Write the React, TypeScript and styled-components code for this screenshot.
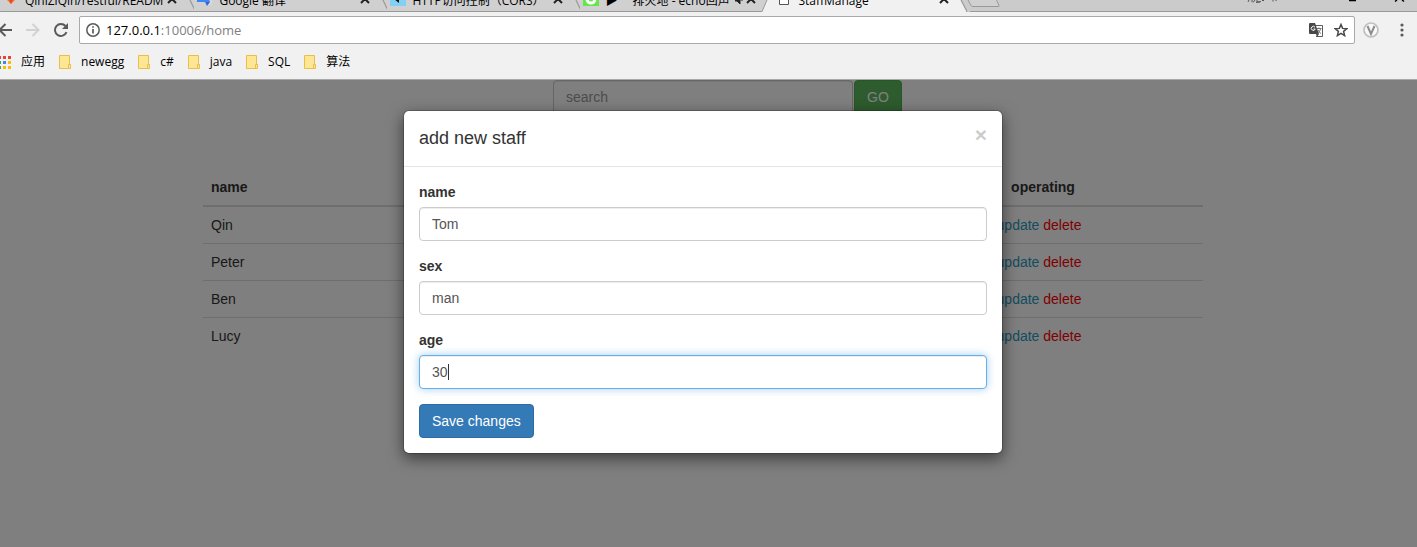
import React from "react";
import styled, { createGlobalStyle } from "styled-components";

const GlobalStyle = createGlobalStyle`
  * { box-sizing: border-box; }
  body {
    margin: 0;
    background: #fff;
    color: #333;
    font: 14px/20px "Liberation Sans", Arial, sans-serif;
  }
  button, input { font: inherit; }
`;

const chromeFont = `"Open Sans", "Noto Sans CJK SC", sans-serif`;

const Window = styled.div`
  display: flex;
  flex-direction: column;
  min-height: 100vh;
  overflow: hidden;
`;

/* ---------- browser chrome ---------- */

const Chrome = styled.header`
  font: 12px/16px ${chromeFont};
  color: #000;
  background: #f1f1f1;
  border-bottom: 1px solid #a9a9a9;
`;

const TabStrip = styled.div`
  display: flex;
  align-items: flex-end;
  height: 12px;
  overflow: hidden;
  background: #cbcbcb;
  box-shadow: inset 0 -1px #999;
`;

const Tab = styled.div<{ $active?: boolean }>`
  display: flex;
  flex: 0 0 193px;
  align-items: flex-end;
  height: 28px;
  padding-left: 3px;
  background: ${(p) => (p.$active ? "#f1f1f1" : "#d0d0d0")};
  box-shadow: ${(p) => (p.$active ? "none" : "inset 0 -1px #999")};
`;

const TabIcon = styled.svg`
  flex: none;
  width: 16px;
  height: 16px;
  margin-bottom: 6px;
`;

const TabTitle = styled.span`
  flex: 1;
  min-width: 0;
  margin: 0 4px 3px 6px;
  overflow: hidden;
  white-space: nowrap;
`;

const TabButton = styled.button`
  display: flex;
  flex: none;
  margin: 0 0 8px;
  padding: 0;
  border: 0;
  background: none;
`;

const TabEdge = styled.svg`
  flex: none;
  margin-left: 4px;
  width: 13px;
  height: 12px;
  overflow: visible;
`;

const StripEnd = styled.div`
  display: flex;
  flex: 1;
  justify-content: space-between;
`;

const Toolbar = styled.div`
  display: flex;
  align-items: center;
  height: 36px;
`;

const IconButton = styled.button<{ $width: number }>`
  display: flex;
  flex: none;
  justify-content: center;
  width: ${(p) => p.$width}px;
  padding: 0;
  border: 0;
  background: none;
`;

const NavButtons = styled.div`
  display: flex;
  flex: none;
  align-items: center;
  gap: 12px;
  width: 79px;
`;

const AddressBar = styled.div`
  display: flex;
  flex: 1;
  align-items: center;
  height: 28px;
  padding: 0 0 0 6px;
  background: #fff;
  border: 1px solid #a9a9a9;
  border-radius: 2px;
`;

const Address = styled.div`
  flex: 1;
  margin-left: 6px;
  color: #808080;
  font-size: 13px;
  line-height: 20px;
`;

const Host = styled.span`
  color: #000;
`;

const Bookmarks = styled.nav`
  display: flex;
  align-items: center;
  gap: 14px;
  height: 31px;
  padding-bottom: 3px;
`;

const Bookmark = styled.a`
  display: flex;
  align-items: center;
  gap: 10px;
  color: #000;
  text-decoration: none;
`;

/* ---------- page ---------- */

const Viewport = styled.div`
  position: relative;
  flex: 1;
  padding-right: 11px;
`;

const Content = styled.main`
  max-width: 1000px;
  margin: 0 auto;
`;

const SearchRow = styled.form`
  display: flex;
  gap: 1px;
  margin: 0 0 55px 35%;
`;

const TextInput = styled.input<{ $width: string; $focused?: boolean }>`
  width: ${(p) => p.$width};
  height: 34px;
  padding: 6px 12px;
  color: #555;
  background: #fff;
  border: 1px solid ${(p) => (p.$focused ? "#66afe9" : "#ccc")};
  border-radius: 4px;
  outline: 0;
  box-shadow: inset 0 1px 1px rgba(0, 0, 0, 0.075)
    ${(p) => (p.$focused ? ", 0 0 8px rgba(102, 175, 233, 0.6)" : "")};
  &::placeholder { color: #999; opacity: 1; }
`;

const Button = styled.button<{ $tone: "success" | "primary" }>`
  height: 34px;
  padding: 6px 12px;
  color: #fff;
  background: ${(p) => (p.$tone === "success" ? "#5cb85c" : "#337ab7")};
  border: 1px solid ${(p) => (p.$tone === "success" ? "#4cae4c" : "#2e6da4")};
  border-radius: 4px;
`;

const Table = styled.table`
  width: 100%;
  border-spacing: 0;
  th, td { padding: 8px; text-align: left; }
  th { border-bottom: 2px solid #ddd; }
  tr + tr td { border-top: 1px solid #ddd; }
  th:last-child, td:last-child { width: 32%; text-align: center; }
  td:last-child { padding-right: 16px; }
`;

const Action = styled.a<{ $color: string }>`
  color: ${(p) => p.$color};
  text-decoration: none;
`;

const Backdrop = styled.div`
  position: absolute;
  inset: 0;
  padding: 30px 11px 30px 0;
  background: rgba(0, 0, 0, 0.5);
`;

const Dialog = styled.section`
  max-width: 600px;
  margin: 0 auto;
  background: #fff;
  background-clip: padding-box;
  border: 1px solid rgba(0, 0, 0, 0.2);
  border-radius: 6px;
  box-shadow: 0 5px 15px rgba(0, 0, 0, 0.5);
`;

const DialogHeader = styled.header`
  display: flex;
  justify-content: space-between;
  align-items: flex-start;
  padding: 15px;
  border-bottom: 1px solid #e5e5e5;
`;

const DialogTitle = styled.h4`
  margin: 0;
  font-size: 18px;
  font-weight: 500;
  line-height: 25px;
`;

const CloseButton = styled.button`
  padding: 0;
  border: 0;
  background: none;
  color: #000;
  opacity: 0.2;
  font-size: 21px;
  font-weight: 700;
  line-height: 17px;
`;

const DialogBody = styled.form`
  padding: 15px;
`;

const Field = styled.div`
  position: relative;
  margin-bottom: 15px;
`;

const Label = styled.label`
  display: block;
  margin-bottom: 5px;
  font-weight: 700;
`;

const Caret = styled.span`
  position: absolute;
  bottom: 9px;
  left: 29px;
  width: 1px;
  height: 16px;
  background: #333;
`;

const CloseMark = () => (
  <svg width="10" height="10" viewBox="0 0 10 10" stroke="#222" strokeWidth="2">
    <path d="M1 1l8 8M9 1l-8 8" />
  </svg>
);

const Folder = () => (
  <svg width="12" height="14" viewBox="0 0 12 14">
    <path d="M.5.5h10v9h1v4H.5z" fill="#ffe694" stroke="#e6c14a" />
    <path d="M9.500 13V9.500h2" fill="none" stroke="#e6c14a" />
  </svg>
);

const appColors = ["#ea4335", "#ea4335", "#ea4335", "#34a853", "#4285f4", "#fbbc05", "#34a853", "#fbbc05", "#fbbc05"];

const AppsGrid = () => (
  <svg width="11" height="13" viewBox="2 0 11 13">
    {appColors.map((c, i) => (
      <rect key={i} x={(i % 3) * 5} y={Math.floor(i / 3) * 5} width="3" height="3" fill={c} />
    ))}
  </svg>
);

const tabs = [
  {
    title: "QinlZiQin/restful/READM",
    icon: <><path d="M1 7l7 7 7-7-3-7-2 6H6L4 0z" fill="#fc6d26" /><path d="M5 6l3 8 3-8z" fill="#e24329" /></>,
  },
  {
    title: "Google 翻译",
    icon: <><path d="M6 3h9v12H9z" fill="#d8d8d8" /><path d="M0 0h9l4 12H0z" fill="#4285f4" /><path d="M8 12h5l-3 4z" fill="#3367d6" /></>,
  },
  {
    title: "HTTP访问控制（CORS）",
    icon: <><path d="M0 0h16v16H0z" fill="#83d0f2" /><path d="M4 9l5-6v10z" fill="#111" /></>,
  },
  {
    title: "▶ 一排火地 - echo回声",
    icon: <><path d="M0 0h16v16H0z" fill="#66e64b" /><circle cx="8" cy="9" r="4" fill="none" stroke="#fff" strokeWidth="3" /></>,
    sound: true,
  },
  {
    title: "StaffManage",
    icon: <path d="M3.500 1.500h9v13h-9z" fill="#fff" stroke="#555" />,
    active: true,
  },
];

const bookmarks = ["newegg", "c#", "java", "SQL", "算法"];
const staff = ["Qin", "Peter", "Ben", "Lucy"];
const fields = [
  { id: "name", value: "Tom" },
  { id: "sex", value: "man" },
  { id: "age", value: "30", focused: true },
];

function BrowserChrome() {
  return (
    <Chrome>
      <TabStrip>
        {tabs.map((tab, i) => (
          <Tab key={tab.title} $active={tab.active}>
            <TabIcon viewBox="0 0 16 16">{tab.icon}</TabIcon>
            <TabTitle>{tab.title}</TabTitle>
            {tab.sound && (
              <TabButton aria-label="Mute tab">
                <svg width="11" height="10" viewBox="0 0 11 10">
                  <path d="M0 3h2l3-3v10L2 7H0zM7 3v4" fill="#222" stroke="#222" />
                </svg>
              </TabButton>
            )}
            <TabButton aria-label="Close tab"><CloseMark /></TabButton>
            <TabEdge viewBox="0 0 13 12">
              {tab.active && (
                <path d="M8 0l6 12h3V0z" fill="#cbcbcb" />
              )}
              {tabs[i + 1]?.active ? (
                <>
                  <path d="M7 0L2 12h12V0z" fill="#f1f1f1" />
                  <path d="M7 0L2 11.500" stroke="#999" />
                </>
              ) : (
                <path d={tab.active ? "M8 0l6 11.500" : "M9 0l5.500 11.500"} stroke="#999" strokeWidth="1.200" />
              )}
            </TabEdge>
          </Tab>
        ))}
        <StripEnd>
          <svg width="36" height="12" viewBox="0 0 36 12">
            <path d="M2 0l3 5.500q.5 1 2 1h25q1.500 0 1-1L30.500 0" fill="#d0d0d0" stroke="#999" />
          </svg>
          <svg width="172" height="12" viewBox="0 0 172 12" fill="none" stroke="#555">
            <path d="M4 0l-1 2M7 0v2M10 0l-2 2.500M12 0v2h3M11 2.500l5-1M17 .5h2M28 0v1.500M31 0v1" />
            <path d="M104 .5h7M150 1.500l2-1.500M159 1.500L157 0" stroke="#000" strokeWidth="1.500" />
          </svg>
        </StripEnd>
      </TabStrip>
      <Toolbar>
        <NavButtons>
          <IconButton $width={14} aria-label="Back">
            <svg width="14" height="14" viewBox="0 0 14 14" fill="none" stroke="#5a5a5a" strokeWidth="2">
              <path d="M12 7H0M5.500 1l-6 6 6 6" />
            </svg>
          </IconButton>
          <IconButton $width={14} aria-label="Forward">
            <svg width="14" height="14" viewBox="0 0 14 14" fill="none" stroke="#d2d2d2" strokeWidth="2">
              <path d="M0 7h12M6.500 1l6 6-6 6" />
            </svg>
          </IconButton>
          <IconButton $width={18} aria-label="Reload">
            <svg width="16" height="16" viewBox="0 0 16 16" fill="none" stroke="#5a5a5a" strokeWidth="2">
              <path d="M13.500 10.200A6 6 0 1 1 12.500 4" />
              <path d="M15 1v6H9z" fill="#5a5a5a" stroke="none" />
            </svg>
          </IconButton>
        </NavButtons>
        <AddressBar>
          <svg width="14" height="14" viewBox="0 0 14 14" fill="none" stroke="#5a5a5a" strokeWidth="1.500">
            <circle cx="7" cy="7" r="6.200" />
            <path d="M7 6v4.500M7 3.200v1.600" strokeWidth="1.700" />
          </svg>
          <Address><Host>127.0.0.1</Host>:10006/home</Address>
          <IconButton $width={24} aria-label="Translate this page">
            <svg width="14" height="14" viewBox="0 0 14 14">
              <path d="M5 2.500h8.500v11H7" fill="#fff" stroke="#5a5a5a" />
              <path d="M0 1q0-1 1-1h5l4 11H1q-1 0-1-1z" fill="#484848" />
              <path d="M6 4.300A2 2 0 1 0 6.200 6H4.500" fill="none" stroke="#fff" />
              <path d="M8 5.500h4.500M10 4.500v1M11.500 6q-.5 3-3 4.500M9 7q1 2.500 3 3.500" fill="none" stroke="#777" />
              <path d="M7 11h3l-2 3z" fill="#484848" />
            </svg>
          </IconButton>
          <IconButton $width={26} aria-label="Bookmark this page">
            <svg width="14" height="14" viewBox="0 0 14 14">
              <path d="M7 1.500l1.600 3.900 4.200.3-3.200 2.700 1 4.200L7 10.400l-3.600 2.200 1-4.200-3.200-2.700 4.200-.3z" fill="none" stroke="#484848" strokeWidth="1.500" />
            </svg>
          </IconButton>
        </AddressBar>
        <IconButton $width={32} aria-label="Extension">
          <svg width="16" height="16" viewBox="0 0 16 16" fill="none">
            <circle cx="8" cy="8" r="7" fill="#f8f8f8" stroke="#c0c0c0" strokeWidth="1.700" />
            <path d="M4.500 4L8 12l3.500-8" stroke="#8d8d8d" strokeWidth="2" />
          </svg>
        </IconButton>
        <IconButton $width={30} aria-label="Menu">
          <svg width="4" height="14" viewBox="0 0 4 14" fill="#5a5a5a">
            <circle cx="2" cy="2" r="1.600" /><circle cx="2" cy="7" r="1.600" /><circle cx="2" cy="12" r="1.600" />
          </svg>
        </IconButton>
      </Toolbar>
      <Bookmarks>
        <Bookmark href="#apps"><AppsGrid />应用</Bookmark>
        {bookmarks.map((name) => (
          <Bookmark key={name} href="#bookmark"><Folder />{name}</Bookmark>
        ))}
      </Bookmarks>
    </Chrome>
  );
}

function StaffPage() {
  return (
    <Content>
      <SearchRow>
        <TextInput $width="300px" placeholder="search" aria-label="search" />
        <Button $tone="success" type="button">GO</Button>
      </SearchRow>
      <Table>
        <thead>
          <tr><th>name</th><th>operating</th></tr>
        </thead>
        <tbody>
          {staff.map((name) => (
            <tr key={name}>
              <td>{name}</td>
              <td>
                <Action $color="#2a9abf" href="#update">update</Action>{" "}
                <Action $color="#f00" href="#delete">delete</Action>
              </td>
            </tr>
          ))}
        </tbody>
      </Table>
    </Content>
  );
}

function StaffDialog() {
  return (
    <Backdrop>
      <Dialog role="dialog" aria-labelledby="dialog-title">
        <DialogHeader>
          <DialogTitle id="dialog-title">add new staff</DialogTitle>
          <CloseButton type="button">×</CloseButton>
        </DialogHeader>
        <DialogBody>
          {fields.map((f) => (
            <Field key={f.id}>
              <Label htmlFor={f.id}>{f.id}</Label>
              <TextInput id={f.id} $width="100%" $focused={f.focused} defaultValue={f.value} />
              {f.focused && <Caret />}
            </Field>
          ))}
          <Button $tone="primary" type="button">Save changes</Button>
        </DialogBody>
      </Dialog>
    </Backdrop>
  );
}

export default function App() {
  return (
    <Window>
      <GlobalStyle />
      <BrowserChrome />
      <Viewport>
        <StaffPage />
        <StaffDialog />
      </Viewport>
    </Window>
  );
}
